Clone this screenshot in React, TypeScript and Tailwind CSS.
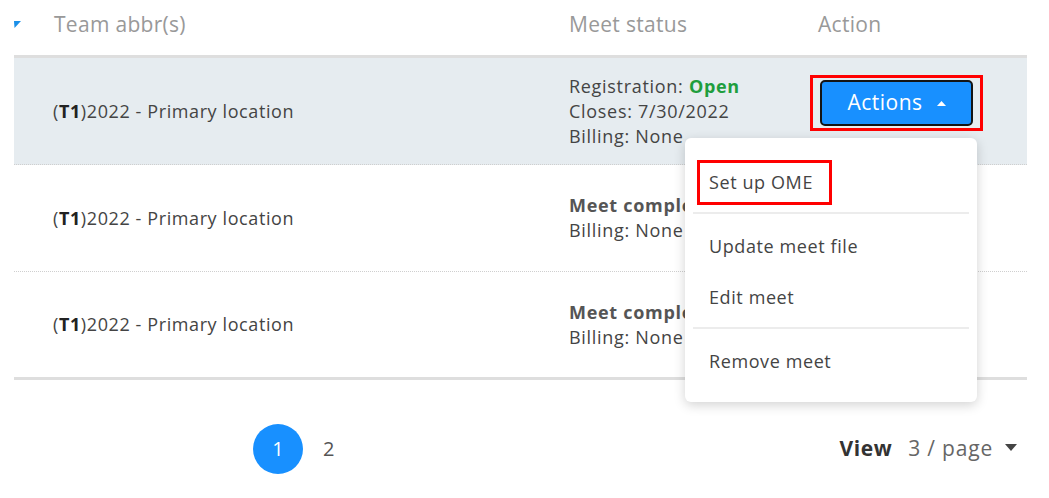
export default function App() {
  return (
    <div className="relative h-[498px] w-[1049px] overflow-hidden bg-white font-['Open_Sans',sans-serif] text-[#444]">
      <div className="ml-[14px] w-[1013px]">
        {/* header */}
        <div className="relative grid h-[58px] grid-cols-[516px_249px_1fr] items-center border-b-[3px] border-[#dedede] pb-[5px] text-[21px] tracking-[0.3px] text-[#999]">
          <svg className="absolute left-0 top-[21px]" width="7" height="7" viewBox="0 0 7 7">
            <polygon points="0,0 7,0 0.5,7" fill="#1a8fe8" />
          </svg>
          <div className="pl-[40px]">Team abbr(s)</div>
          <div className="pl-[39px]">Meet status</div>
          <div className="pl-[39px]">Action</div>
        </div>

        {/* row 1 */}
        <div className="grid h-[107px] grid-cols-[516px_249px_1fr] items-center border-b border-dotted border-[#cfcfcf] bg-[#e6ecf0] text-[18px] tracking-[0.6px]">
          <div className="pl-[39px]">
            (<b className="text-[#222]">T1</b>)2022 - Primary location
          </div>
          <div className="pl-[39px] leading-[25px] tracking-[0.7px]">
            <div>
              Registration: <span className="font-bold text-[#1e9e3e]">Open</span>
            </div>
            <div>Closes: 7/30/2022</div>
            <div>Billing: None</div>
          </div>
          <div className="mb-[16px] pl-[31px]">
            <div className="inline-block border-[3px] border-[#ff0000] px-[7px] py-[2px]">
              <button className="flex h-[46px] w-[153px] items-center justify-center gap-[14px] rounded-[5px] border-2 border-[#141414] bg-[#1890ff] text-[21px] tracking-[0.5px] text-white">
                Actions
                <svg width="9" height="5" viewBox="0 0 9 5">
                  <polygon points="0,5 9,5 4.5,0" fill="#fff" />
                </svg>
              </button>
            </div>
          </div>
        </div>

        {/* row 2 */}
        <div className="grid h-[107px] grid-cols-[516px_249px_1fr] items-center border-b border-dotted border-[#cfcfcf] text-[18px] tracking-[0.6px]">
          <div className="pl-[39px]">
            (<b className="text-[#222]">T1</b>)2022 - Primary location
          </div>
          <div className="pl-[39px] leading-[25px] tracking-[0.7px]">
            <div className="font-bold text-[#555]">Meet completed</div>
            <div>Billing: None</div>
          </div>
          <div />
        </div>

        {/* row 3 */}
        <div className="grid h-[108px] grid-cols-[516px_249px_1fr] items-center border-b-[3px] border-[#dedede] text-[18px] tracking-[0.6px]">
          <div className="pl-[39px]">
            (<b className="text-[#222]">T1</b>)2022 - Primary location
          </div>
          <div className="pl-[39px] leading-[25px] tracking-[0.7px]">
            <div className="font-bold text-[#555]">Meet completed</div>
            <div>Billing: None</div>
          </div>
          <div />
        </div>

        {/* pagination */}
        <div className="flex items-center pt-[44px]">
          <div className="ml-[239px] flex h-[50px] w-[50px] items-center justify-center rounded-full bg-[#1890ff] text-[20px] font-medium text-white">
            1
          </div>
          <div className="ml-[20px] text-[20px] text-[#555]">2</div>
          <div className="ml-auto mr-[10px] flex items-center text-[21px]">
            <span className="font-bold tracking-[0.6px] text-[#333]">View</span>
            <span className="ml-[16px] tracking-[0.8px] text-[#666]">3 / page</span>
            <svg className="ml-[12px] mb-[4px]" width="12" height="7" viewBox="0 0 12 7">
              <polygon points="0,0 12,0 6,7" fill="#444" />
            </svg>
          </div>
        </div>
      </div>

      {/* dropdown menu */}
      <div className="absolute left-[685px] top-[138px] w-[292px] rounded-md bg-white pb-[15px] pt-[22px] text-[18px] tracking-[0.6px] text-[#444] shadow-[0_3px_12px_rgba(0,0,0,0.18)]">
        <div className="ml-[12px] flex h-[45px] w-[135px] items-center border-[3px] border-[#ff0000] pl-[9px]">
          Set up OME
        </div>
        <div className="mx-2 mt-[7px] h-[2px] bg-[#ececec]" />
        <div className="mt-[7px] flex h-[51px] items-center pl-[24px]">Update meet file</div>
        <div className="flex h-[51px] items-center pl-[24px]">Edit meet</div>
        <div className="mx-2 mt-[4px] h-[2px] bg-[#ececec]" />
        <div className="mt-[7px] flex h-[51px] items-center pl-[24px]">Remove meet</div>
      </div>
    </div>
  );
}
